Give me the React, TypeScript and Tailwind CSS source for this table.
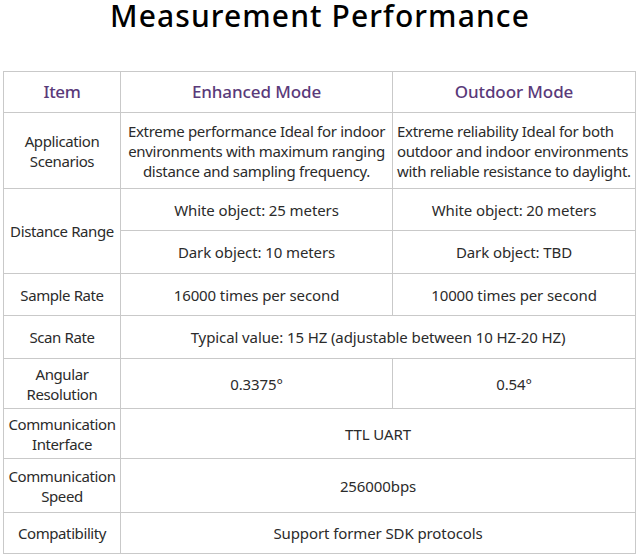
import React from "react";

const td = "border border-[#c9c9c9] text-center align-middle px-1 tracking-[-0.1px]";
const tdn = "border border-[#c9c9c9] text-center align-middle px-1 tracking-[-0.3px]";
const th = "border border-[#c9c9c9] text-center align-middle px-0 tracking-[-0.4px]";

export default function App() {
  return (
    <div className="w-[640px] h-[556px] bg-white overflow-hidden" style={{ fontFamily: '"Noto Sans", sans-serif' }}>
      <div className="h-[71px] pt-px">
        <h1 className="text-center text-[30px] leading-[30px] font-medium text-black tracking-[1.1px]">
          Measurement Performance
        </h1>
      </div>
      <table className="ml-[3px] w-[632px] border-collapse table-fixed text-[15px] leading-[20px] text-[#2b2b2b]">
        <colgroup>
          <col className="w-[117px]" />
          <col className="w-[272px]" />
          <col className="w-[243px]" />
        </colgroup>
        <tbody>
          <tr className="h-[41px] text-[17px] text-[#5a3a7a] font-medium">
            <td className={th}>Item</td>
            <td className={td}>Enhanced Mode</td>
            <td className={td}>Outdoor Mode</td>
          </tr>
          <tr className="h-[76px]">
            <td className={th}>Application Scenarios</td>
            <td className={tdn}>Extreme performance Ideal for indoor environments with maximum ranging distance and sampling frequency.</td>
            <td className={tdn + " text-left"}>Extreme reliability Ideal for both outdoor and indoor environments with reliable resistance to daylight.</td>
          </tr>
          <tr className="h-[42px]">
            <td className={th} rowSpan={2}>Distance Range</td>
            <td className={td}>White object: 25 meters</td>
            <td className={td}>White object: 20 meters</td>
          </tr>
          <tr className="h-[43px]">
            <td className={td}>Dark object: 10 meters</td>
            <td className={td}>Dark object: TBD</td>
          </tr>
          <tr className="h-[42px]">
            <td className={th}>Sample Rate</td>
            <td className={td}>16000 times per second</td>
            <td className={td}>10000 times per second</td>
          </tr>
          <tr className="h-[43px]">
            <td className={th}>Scan Rate</td>
            <td className={td} colSpan={2}>Typical value: 15 HZ (adjustable between 10 HZ-20 HZ)</td>
          </tr>
          <tr className="h-[50px]">
            <td className={th}>Angular Resolution</td>
            <td className={td}>0.3375°</td>
            <td className={td}>0.54°</td>
          </tr>
          <tr className="h-[50px]">
            <td className={th}>Communication Interface</td>
            <td className={td} colSpan={2}>TTL UART</td>
          </tr>
          <tr className="h-[54px]">
            <td className={th}>Communication Speed</td>
            <td className={td} colSpan={2}>256000bps</td>
          </tr>
          <tr className="h-[41px]">
            <td className={th}>Compatibility</td>
            <td className={td} colSpan={2}>Support former SDK protocols</td>
          </tr>
        </tbody>
      </table>
    </div>
  );
}
